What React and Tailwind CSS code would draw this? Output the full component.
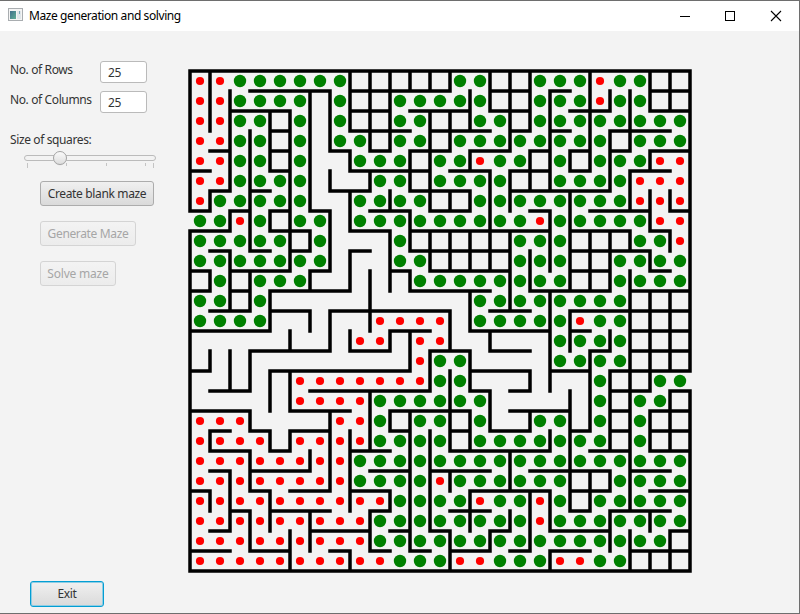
const CELL = 20;

// Wall runs along each grid line: [from, to] in cells.
const HORIZONTAL = [
  [[0, 25]],
  [[3, 7], [8, 13], [15, 17], [18, 19], [23, 25]],
  [[2, 5], [8, 10], [11, 14], [15, 17], [19, 21], [23, 25]],
  [[4, 5], [8, 11], [12, 15], [16, 17], [18, 19], [21, 24]],
  [[1, 2], [4, 5], [7, 8], [9, 10], [11, 13], [14, 16], [17, 18], [19, 20], [21, 22], [23, 25]],
  [[0, 1], [4, 5], [8, 12], [13, 15], [16, 18], [19, 20], [22, 24]],
  [[1, 2], [3, 4], [7, 9], [11, 14], [16, 21]],
  [[0, 1], [2, 3], [4, 5], [6, 7], [9, 11], [12, 14], [17, 18], [20, 23], [24, 25]],
  [[0, 2], [4, 6], [8, 10], [11, 18], [19, 22], [23, 24]],
  [[1, 2], [3, 4], [5, 6], [8, 9], [11, 16], [19, 23]],
  [[0, 1], [2, 5], [6, 7], [10, 11], [12, 16], [19, 21], [23, 24]],
  [[0, 1], [2, 3], [4, 8], [11, 15], [17, 21], [22, 25]],
  [[1, 3], [4, 6], [7, 13], [15, 17], [19, 25]],
  [[0, 4], [10, 12], [14, 18], [19, 20], [22, 25]],
  [[3, 7], [8, 10], [12, 14], [15, 17], [20, 21], [22, 25]],
  [[0, 1], [4, 11], [14, 17], [18, 20], [21, 25]],
  [[1, 3], [6, 12], [14, 15], [16, 17], [21, 23], [24, 25]],
  [[0, 3], [5, 8], [10, 14], [16, 19], [21, 22], [23, 25]],
  [[1, 2], [3, 4], [5, 7], [10, 11], [13, 14], [15, 17], [19, 20], [21, 22], [23, 25]],
  [[1, 3], [4, 5], [8, 10], [13, 18], [20, 22], [23, 25]],
  [[1, 2], [3, 6], [9, 11], [12, 15], [17, 21], [22, 24]],
  [[0, 1], [3, 4], [5, 7], [8, 10], [14, 18], [19, 21], [23, 25]],
  [[2, 3], [4, 7], [9, 10], [13, 15], [19, 20], [21, 24]],
  [[1, 2], [6, 9], [10, 11], [12, 13], [15, 16], [18, 21], [24, 25]],
  [[0, 2], [3, 5], [7, 8], [9, 10], [11, 12], [13, 15], [16, 17], [18, 20], [22, 25]],
  [[0, 25]],
];

const VERTICAL = [
  [[0, 7], [8, 25]],
  [[0, 3], [6, 7], [10, 11], [14, 15], [18, 19], [21, 22]],
  [[1, 6], [7, 8], [9, 12], [14, 16], [20, 23]],
  [[3, 9], [10, 12], [14, 16], [17, 18], [19, 21], [22, 24]],
  [[2, 5], [7, 8], [11, 13], [15, 17], [18, 19], [21, 23]],
  [[2, 10], [13, 14], [15, 17], [18, 19], [23, 25]],
  [[1, 7], [8, 9], [10, 11], [12, 13], [19, 20], [22, 24]],
  [[1, 4], [5, 6], [7, 10], [12, 14], [17, 21]],
  [[0, 3], [4, 5], [6, 8], [9, 11], [13, 14], [18, 22], [24, 25]],
  [[0, 4], [5, 6], [10, 13], [16, 19], [22, 24]],
  [[0, 4], [6, 7], [8, 11], [13, 14], [17, 18], [21, 22]],
  [[0, 1], [4, 6], [7, 9], [10, 11], [13, 15], [17, 24]],
  [[0, 1], [2, 7], [8, 10], [14, 16], [18, 23]],
  [[0, 1], [2, 4], [6, 7], [8, 10], [12, 14], [15, 19], [20, 21], [23, 25]],
  [[1, 3], [4, 5], [6, 7], [8, 10], [11, 13], [14, 16], [17, 19], [21, 23]],
  [[0, 2], [5, 10], [13, 14], [16, 18], [23, 24]],
  [[0, 4], [5, 7], [8, 12], [19, 21], [22, 23]],
  [[0, 3], [4, 6], [9, 11], [15, 16], [17, 18], [21, 24]],
  [[1, 6], [7, 10], [11, 16], [18, 19], [21, 23], [24, 25]],
  [[4, 5], [6, 11], [12, 14], [16, 22]],
  [[0, 5], [8, 11], [14, 18], [20, 22]],
  [[1, 2], [3, 6], [8, 11], [13, 14], [15, 19], [20, 21], [22, 24]],
  [[1, 4], [5, 7], [8, 9], [10, 22], [23, 25]],
  [[0, 2], [4, 5], [6, 8], [9, 10], [11, 16], [17, 19], [22, 23], [24, 25]],
  [[0, 2], [6, 7], [8, 9], [11, 15], [16, 19], [23, 25]],
  [[0, 15], [16, 25]],
];

// g: on the path, r: visited and abandoned, .: untouched
const TRAIL = [
  "rrgggggg.....gg..gggrgg..",
  "rrgggg.g..ggggg..gggrgg..",
  "rrgg.g.g..gg..gg.gggggggg",
  "rrgg.g.gg.gg.gggggggg.ggg",
  "rrgg.g..ggg.ggrgg.g.gggrr",
  "rrgggg...gg.gggg..ggggrrr",
  "rggggg..gggg..ggggggggrrr",
  "ggrg.gg.gggggggggrgggggrr",
  "ggggg.g...g.....ggg...ggr",
  "ggggggg...gg....ggg..gggg",
  ".g.ggg.....gggggggg..gggg",
  "gg.g..........gggggggg...",
  "gggg.....rrrr.gggggrgg...",
  "........rr.rr.....gggg...",
  "...........rgg....gggg...",
  ".....rrrrrrrgg......g..gg",
  ".....rrrrgggggg.....g.gg.",
  "rrr....rrg.gg.g..gg.g.g..",
  "rrrr.rrrrgggg.ggggggg.g..",
  "rrrrrrrrggggggggggggggggg",
  "rrrrrrrrggggrgggggg..gggg",
  "rrrrrrrrrrggggrggrg.ggggg",
  "rrrrrrrrrggggggggrggggggg",
  "rrrrrrrrrggggggggggggggg.",
  "rrrrrrrrrrgggrrgggrrgg...",
];

const wallPath =
  HORIZONTAL.flatMap((runs, row) =>
    runs.map(([a, b]) => `M${a * CELL} ${row * CELL}H${b * CELL}`)
  ).join("") +
  VERTICAL.flatMap((runs, col) =>
    runs.map(([a, b]) => `M${col * CELL} ${a * CELL}V${b * CELL}`)
  ).join("");

function Maze() {
  return (
    <svg width="510" height="510" viewBox="-5 -6 510 510" className="block">
      <path d={wallPath} fill="none" stroke="#000" strokeWidth="3.5" strokeLinecap="square" />
      {TRAIL.flatMap((line, r) =>
        [...line].map((mark, c) =>
          mark === "." ? null : (
            <circle
              key={`${r}-${c}`}
              cx={c * CELL + 10}
              cy={r * CELL + 10}
              r={mark === "g" ? 6.2 : 4.1}
              fill={mark === "g" ? "#008000" : "#ff0000"}
            />
          )
        )
      )}
    </svg>
  );
}

function TitleBar() {
  return (
    <header className="flex h-[30px] items-center bg-white pl-2">
      <svg width="15" height="13" viewBox="0 0 15 13" className="mr-1.5 mb-[3px] shrink-0">
        <defs>
          <linearGradient id="pane" x1="0" y1="0" x2="1" y2="1">
            <stop offset="0" stopColor="#3f6f8c" />
            <stop offset="1" stopColor="#5fae96" />
          </linearGradient>
        </defs>
        <rect x="0.5" y="0.5" width="14" height="12" fill="#f4f4f4" stroke="#a9adb0" />
        <rect x="2" y="3" width="6" height="8" fill="url(#pane)" />
        <rect x="9" y="3" width="4" height="8" fill="#dfe6ea" />
        <path d="M11.5 3V6" stroke="#7fa8b8" />
      </svg>
      <h1 className="text-xs tracking-[-0.41px] whitespace-nowrap text-black">Maze generation and solving</h1>
      <svg width="102" height="12" viewBox="0 0 102 12" className="mr-[17px] ml-auto" fill="none" stroke="#000">
        <path d="M0 6.5H10" />
        <rect x="45.5" y="1.5" width="9" height="9" />
        <path d="M91 1L101 11M101 1L91 11" strokeWidth="1.1" />
      </svg>
    </header>
  );
}

function Field({ label, value }) {
  return (
    <label className="flex h-[22px] items-center">
      <span className="w-[90px] pb-1 tracking-[-0.38px] whitespace-nowrap">{label}</span>
      <span className="flex h-[22px] w-[47px] items-center rounded-[3px] border border-[#bababa] bg-white pt-px pl-[7px] tracking-[-0.3px]">
        {value}
      </span>
    </label>
  );
}

function SizeSlider() {
  return (
    <svg width="134" height="19" viewBox="0 0 134 19" className="mt-0.5 ml-[13px] block">
      <defs>
        <linearGradient id="knob" x1="0" y1="0" x2="0" y2="1">
          <stop offset="0" stopColor="#fbfbfb" />
          <stop offset="1" stopColor="#dcdcdc" />
        </linearGradient>
      </defs>
      <rect x="1.5" y="5.5" width="131" height="5" rx="2.5" fill="#f3f3f3" stroke="#bbbbbb" />
      <path d="M4.5 13V18M130.5 13V18M43.5 13V16M83.5 13V16M122.5 13V16" stroke="#c4c4c4" />
      <circle cx="37" cy="8.8" r="6.7" fill="#e3e3e3" />
      <circle cx="37" cy="8" r="6.5" fill="url(#knob)" stroke="#a3a3a3" />
    </svg>
  );
}

export default function App() {
  return (
    <div className="flex h-[614px] w-[800px] flex-col overflow-hidden border-t border-r border-b border-[#6e6e6e] bg-[#f3f3f3] font-['Noto_Sans',sans-serif] text-xs text-[#333333]">
      <TitleBar />
      <main className="flex flex-1">
        <aside className="flex w-[185px] shrink-0 flex-col items-start pt-[30px] pl-2.5">
          <Field label="No. of Rows" value="25" />
          <div className="h-2" />
          <Field label="No. of Columns" value="25" />
          <p className="mt-[19px] h-4 leading-4 tracking-[-0.38px] whitespace-nowrap">Size of squares:</p>
          <SizeSlider />
          <button className="mt-3 ml-[30px] h-[25px] w-[114px] rounded-[3px] border border-[#acacac] bg-linear-to-b from-[#f0f0f0] to-[#dadada] pt-px tracking-[-0.35px] whitespace-nowrap">
            Create blank maze
          </button>
          <button className="mt-[15px] ml-[30px] h-[25px] w-24 rounded-[3px] border border-[#d4d4d4] bg-linear-to-b from-[#f3f3f3] to-[#ececec] pt-px tracking-[-0.35px] whitespace-nowrap text-[#a6a6a6]">
            Generate Maze
          </button>
          <button className="mt-[15px] ml-[30px] h-[25px] w-[76px] rounded-[3px] border border-[#d4d4d4] bg-linear-to-b from-[#f3f3f3] to-[#ececec] pt-px tracking-[-0.2px] whitespace-nowrap text-[#a6a6a6]">
            Solve maze
          </button>
          <button className="mt-auto mb-[6px] ml-5 h-[26px] w-[74px] rounded-[3px] border border-[#039ed3] bg-linear-to-b from-[#f0f0f0] to-[#dadada] tracking-[-0.3px] ring-1 ring-[#8fcde4] ring-inset">
            Exit
          </button>
        </aside>
        <section className="pt-[34px]">
          <Maze />
        </section>
      </main>
    </div>
  );
}
